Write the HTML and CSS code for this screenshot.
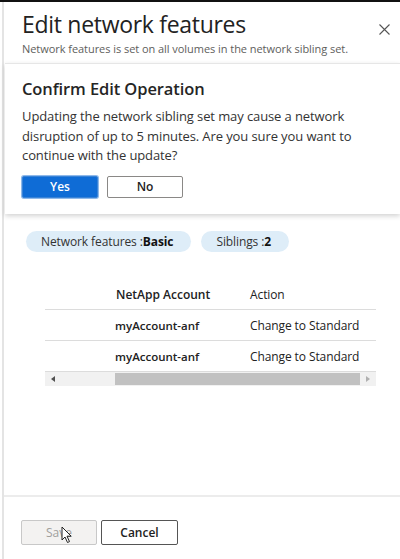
FILE: index.html
```html
<!DOCTYPE html>
<html>
<head>
<meta charset="utf-8">
<link rel="stylesheet" href="styles.css">
</head>
<body>
<div class="topbar"></div>
<div class="panel">
  <header class="head">
    <div class="head-text">
      <h1 class="title">Edit network features</h1>
      <p class="subtitle">Network features is set on all volumes in the network sibling set.</p>
    </div>
    <svg class="close" width="11" height="11" viewBox="0 0 11 11"><path d="M0.5 0.5 L10.5 10.5 M10.5 0.5 L0.5 10.5" stroke="#555" stroke-width="1.1" fill="none"/></svg>
  </header>
  <section class="dialog">
    <h2 class="dialog-title">Confirm Edit Operation</h2>
    <p class="dialog-body">Updating the network sibling set may cause a network disruption of up to 5 minutes. Are you sure you want to continue with the update?</p>
    <div class="dialog-actions">
      <button class="btn btn-primary">Yes</button>
      <button class="btn btn-default">No</button>
    </div>
  </section>
  <div class="content">
    <div class="pills">
      <span class="pill">Network features :<b>Basic</b></span>
      <span class="pill">Siblings :<b>2</b></span>
    </div>
    <div class="table-wrap">
      <div class="trow thead">
        <span class="c1">NetApp Account</span>
        <span class="c2">Action</span>
      </div>
      <div class="trow">
        <span class="c1">myAccount-anf</span>
        <span class="c2">Change to Standard</span>
      </div>
      <div class="trow">
        <span class="c1">myAccount-anf</span>
        <span class="c2">Change to Standard</span>
      </div>
      <div class="scrollbar">
        <span class="arrow arrow-left"></span>
        <span class="thumb"></span>
        <span class="arrow arrow-right"></span>
      </div>
    </div>
  </div>
  <footer class="footer">
    <div class="footer-actions">
      <button class="btn btn-disabled">Save</button>
      <button class="btn btn-default btn-cancel">Cancel</button>
      <svg class="cursor" width="12" height="18" viewBox="0 0 12 18"><path d="M1 1 L1 14 L4 11 L6.5 16.5 L8.5 15.6 L6 10.2 L10.2 10.2 Z" fill="#fff" stroke="#222" stroke-width="1" stroke-linejoin="round"/></svg>
    </div>
  </footer>
</div>
</body>
</html>
```
FILE: styles.css
```css
* { box-sizing: border-box; }
html, body { margin: 0; padding: 0; }
body {
  width: 400px;
  height: 559px;
  overflow: hidden;
  background: #fff;
  font-family: "Open Sans", "Noto Sans", sans-serif;
  color: #323130;
}
.topbar { height: 2px; background: #111; }
.panel {
  margin-left: 2px;
  border-left: 2px solid #e4e4e4;
  height: 557px;
  display: flex;
  flex-direction: column;
}
.head {
  display: flex;
  justify-content: space-between;
  align-items: flex-start;
  padding: 6px 10px 0 18px;
  height: 61px;
}
.title {
  margin: 0;
  font-weight: 400;
  font-size: 23px;
  line-height: 32px;
  color: #222;
  letter-spacing: -0.3px;
}
.subtitle {
  margin: 1px 0 0;
  font-size: 11px;
  color: #605e5c;
  letter-spacing: -0.05px;
}
.close { margin-top: 16px; }
.dialog {
  margin-left: 1px;
  border-top: 1px solid #e6e6e6;
  box-shadow: 0 2px 5px rgba(0,0,0,0.18);
  padding: 13px 14px 14px 17px;
  background: #fff;
  height: 151px;
}
.dialog-title {
  margin: 0;
  font-size: 16.5px;
  font-weight: 600;
  color: #252525;
  line-height: 24px;
  letter-spacing: -0.1px;
}
.dialog-body {
  margin: 6px 0 0;
  font-size: 13px;
  line-height: 19.5px;
  color: #333;
  letter-spacing: -0.1px;
}
.dialog-actions {
  display: flex;
  gap: 9px;
  margin-top: 10px;
}
.btn {
  font-family: inherit;
  font-size: 12px;
  font-weight: 600;
  width: 76px;
  height: 22px;
  padding: 0;
  border-radius: 2px;
  background: #fff;
  color: #222;
  border: 1px solid #8a8886;
}
.btn-primary {
  background: #0f6cd6;
  border-color: #3a83d6;
  color: #fff;
  box-shadow: 0 0 0 1px #8fb9ea;
}
.content { padding: 17px 0 0 22px; flex: 1; }
.pills { display: flex; gap: 10px; }
.pill {
  background: #deedf8;
  border-radius: 11px;
  height: 21px;
  line-height: 21px;
  font-size: 12px;
  padding: 0 18px 0 15px;
  color: #333;
  letter-spacing: -0.1px;
}
.pill b { font-weight: 700; color: #111; }
.table-wrap {
  margin: 28px 0 0 19px;
  width: 331px;
}
.trow {
  display: flex;
  height: 31px;
  align-items: center;
  border-bottom: 1px solid #dcdcdc;
  font-size: 11.5px;
  color: #222;
}
.trow.thead { height: 30px; font-weight: 600; font-size: 12px; }
.thead .c1 { padding-left: 71px; width: 205px; }
.c1 { width: 205px; padding-left: 70px; font-weight: 600; }
.thead .c2 { font-weight: 400; }
.c2 { font-size: 12px; letter-spacing: -0.1px; }
.trow:not(.thead) .c1 { font-size: 11.5px; }
.scrollbar {
  height: 14px;
  background: #f1f1f1;
  display: flex;
  align-items: center;
}
.arrow { width: 0; height: 0; border-top: 3px solid transparent; border-bottom: 3px solid transparent; }
.arrow-left { border-right: 4px solid #505050; margin-left: 6px; }
.arrow-right { border-left: 4px solid #b0b0b0; margin-left: 6px; }
.thumb {
  height: 12px;
  background: #c1c1c1;
  width: 245px;
  margin-left: 60px;
}
.footer {
  border-top: 2px solid #ececec;
  height: 64px;
  padding: 23px 0 0 17px;
}
.footer-actions { display: flex; gap: 4px; position: relative; }
.btn-disabled {
  background: #f3f2f1;
  border-color: #c8c8c8;
  color: #a19f9d;
  height: 25px;
  font-weight: 400;
}
.btn-cancel { height: 25px; border-color: #555; width: 77px; }
.cursor { position: absolute; left: 40px; top: 6px; }
```
